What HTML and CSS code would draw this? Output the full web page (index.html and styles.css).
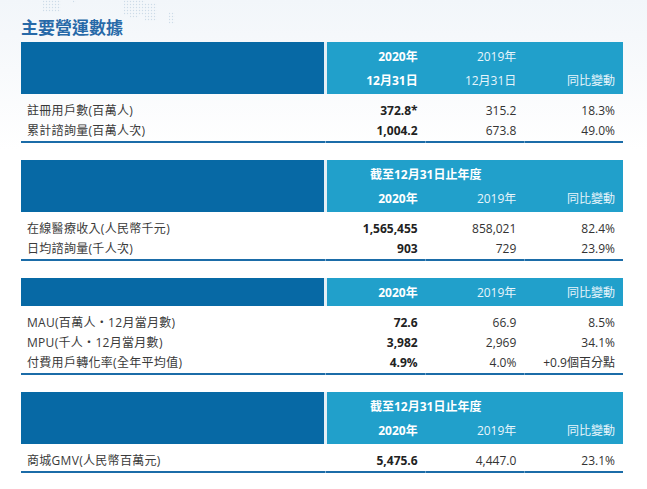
FILE: index.html
```html
<!DOCTYPE html>
<html lang="zh-Hant">
<head>
<meta charset="utf-8">
<title>主要營運數據</title>
<link rel="stylesheet" href="styles.css">
</head>
<body>
<div class="page">
  <svg class="map" width="200" height="30" viewBox="0 0 200 30" aria-hidden="true">
    <defs>
      <pattern id="dots" width="3" height="3" patternUnits="userSpaceOnUse">
        <circle cx="1.5" cy="1.5" r="0.7" fill="#cddbe8"/>
      </pattern>
    </defs>
    <rect x="43" y="0" width="18" height="12" fill="url(#dots)"/>
    <rect x="73" y="0" width="3" height="3" fill="url(#dots)"/>
    <rect x="124" y="0" width="21" height="15" fill="url(#dots)"/>
    <rect x="145" y="3" width="12" height="18" fill="url(#dots)"/>
    <rect x="130" y="15" width="9" height="3" fill="url(#dots)"/>
    <rect x="169" y="12" width="6" height="12" fill="url(#dots)"/>
  </svg>
  <h1 class="title">主要營運數據</h1>

  <section class="tbl">
    <div class="head">
      <div class="head-dark"></div>
      <div class="head-light">
        <div class="hrow"><span class="hc b">2020年</span><span class="hc">2019年</span><span class="hc"></span></div>
        <div class="hrow"><span class="hc b">12月31日</span><span class="hc">12月31日</span><span class="hc">同比變動</span></div>
      </div>
    </div>
    <div class="body">
      <div class="row"><span class="label">註冊用戶數(百萬人)</span><span class="num b">372.8*</span><span class="num">315.2</span><span class="num">18.3%</span></div>
      <div class="row"><span class="label">累計諮詢量(百萬人次)</span><span class="num b">1,004.2</span><span class="num">673.8</span><span class="num">49.0%</span></div>
    </div>
  </section>

  <section class="tbl">
    <div class="head">
      <div class="head-dark"></div>
      <div class="head-light">
        <div class="hrow"><span class="hc span b">截至12月31日止年度</span><span class="hc"></span></div>
        <div class="hrow"><span class="hc b">2020年</span><span class="hc">2019年</span><span class="hc">同比變動</span></div>
      </div>
    </div>
    <div class="body">
      <div class="row"><span class="label">在線醫療收入(人民幣千元)</span><span class="num b">1,565,455</span><span class="num">858,021</span><span class="num">82.4%</span></div>
      <div class="row"><span class="label">日均諮詢量(千人次)</span><span class="num b">903</span><span class="num">729</span><span class="num">23.9%</span></div>
    </div>
  </section>

  <section class="tbl">
    <div class="head">
      <div class="head-dark"></div>
      <div class="head-light">
        <div class="hrow"><span class="hc b">2020年</span><span class="hc">2019年</span><span class="hc">同比變動</span></div>
      </div>
    </div>
    <div class="body">
      <div class="row"><span class="label">MAU(百萬人・12月當月數)</span><span class="num b">72.6</span><span class="num">66.9</span><span class="num">8.5%</span></div>
      <div class="row"><span class="label">MPU(千人・12月當月數)</span><span class="num b">3,982</span><span class="num">2,969</span><span class="num">34.1%</span></div>
      <div class="row"><span class="label">付費用戶轉化率(全年平均值)</span><span class="num b">4.9%</span><span class="num">4.0%</span><span class="num">+0.9個百分點</span></div>
    </div>
  </section>

  <section class="tbl">
    <div class="head">
      <div class="head-dark"></div>
      <div class="head-light">
        <div class="hrow"><span class="hc span b">截至12月31日止年度</span><span class="hc"></span></div>
        <div class="hrow"><span class="hc b">2020年</span><span class="hc">2019年</span><span class="hc">同比變動</span></div>
      </div>
    </div>
    <div class="body">
      <div class="row"><span class="label">商城GMV(人民幣百萬元)</span><span class="num b">5,475.6</span><span class="num">4,447.0</span><span class="num">23.1%</span></div>
    </div>
  </section>
</div>
</body>
</html>
```

FILE: styles.css
```css
html, body {
  margin: 0;
  padding: 0;
}
body {
  width: 647px;
  height: 489px;
  overflow: hidden;
  background: linear-gradient(to bottom, #f2f6fa 0px, #f8fafc 70px, #ffffff 150px);
  font-family: "Open Sans", "Noto Sans CJK TC", sans-serif;
  color: #333;
}
.page {
  position: relative;
  padding: 0 24px 0 21px;
}
.map {
  position: absolute;
  left: 0;
  top: 0;
}
.title {
  position: relative;
  margin: 0;
  padding-top: 17px;
  height: 25px;
  line-height: 20px;
  font-size: 17px;
  font-weight: 700;
  color: #2769a8;
  font-family: "Noto Sans CJK TC", sans-serif;
}
.tbl {
  width: 602px;
  margin-bottom: 17px;
}
.head {
  display: flex;
  gap: 3px;
  background: #e4eff6;
}
.head-dark {
  width: 303px;
  background: #0769a5;
}
.head-light {
  flex: 1;
  background: #21a0cb;
  padding: 3px 0 1px;
}
.hrow {
  display: grid;
  grid-template-columns: repeat(3, 1fr);
  height: 24px;
  line-height: 24px;
  font-size: 12px;
  color: #e8f5fb;
}
.hc {
  text-align: right;
  padding-right: 8px;
  white-space: nowrap;
}
.hc.b {
  font-weight: 700;
  color: #ffffff;
}
.hc.span {
  grid-column: 1 / 3;
  text-align: center;
  padding-right: 0;
}
.body {
  position: relative;
  padding-top: 7px;
  border-bottom: 2px solid #1b6ca8;
}
.body::after {
  content: "";
  position: absolute;
  left: 0;
  right: 0;
  bottom: -2px;
  height: 2px;
  background:
    linear-gradient(to right, transparent 304px, rgba(255,255,255,0.45) 304px, rgba(255,255,255,0.45) 305px, transparent 305px),
    linear-gradient(to right, transparent 404px, rgba(255,255,255,0.35) 404px, rgba(255,255,255,0.35) 405px, transparent 405px),
    linear-gradient(to right, transparent 503px, rgba(255,255,255,0.35) 503px, rgba(255,255,255,0.35) 504px, transparent 504px);
}
.row {
  display: grid;
  grid-template-columns: 306px repeat(3, 1fr);
  height: 20px;
  line-height: 20px;
  font-size: 12px;
}
.label {
  padding-left: 6px;
  color: #3a3a3a;
  letter-spacing: 0.3px;
  white-space: nowrap;
}
.num {
  text-align: right;
  padding-right: 8px;
  color: #333;
  white-space: nowrap;
}
.num.b {
  font-weight: 700;
  color: #222;
}
```
